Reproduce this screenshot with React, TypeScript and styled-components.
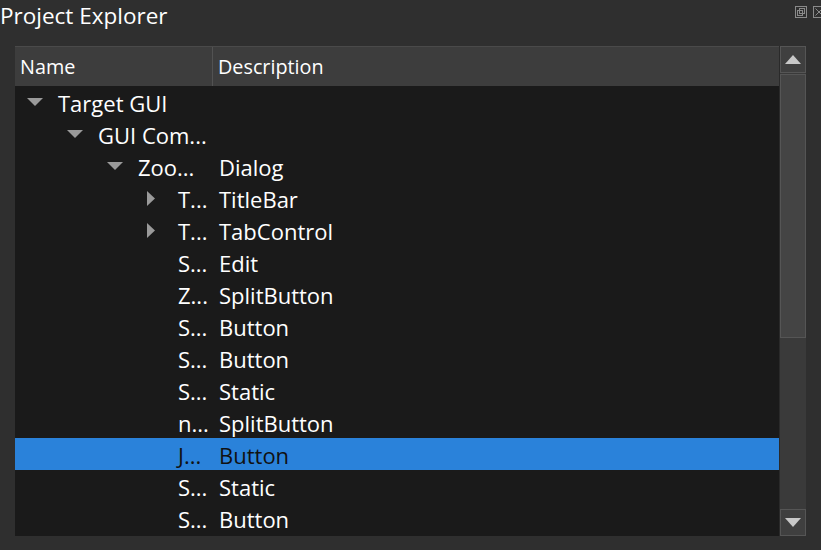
import React from "react";
import styled, { createGlobalStyle } from "styled-components";

const GlobalStyle = createGlobalStyle`
  html, body {
    margin: 0;
    padding: 0;
    background: #2f2f2f;
    overflow: hidden;
  }
  body {
    font-family: "Open Sans", "Noto Sans", "Liberation Sans", sans-serif;
    color: #ffffff;
  }
`;

const Window = styled.div`
  width: 821px;
  height: 550px;
  background: #2f2f2f;
  display: flex;
  flex-direction: column;
  box-sizing: border-box;
`;

const TitleBar = styled.div`
  height: 46px;
  display: flex;
  align-items: flex-start;
  justify-content: space-between;
`;

const Title = styled.div`
  font-size: 22.5px;
  line-height: 31px;
  color: #ffffff;
`;

const TitleButtons = styled.div`
  display: flex;
  gap: 6px;
  padding-top: 6px;
  margin-right: -4px;
`;

const Panel = styled.div`
  margin-left: 15px;
  width: 791px;
  height: 490px;
  display: flex;
`;

const Tree = styled.div`
  flex: 1;
  display: flex;
  flex-direction: column;
  background: #1a1a1a;
  overflow: hidden;
`;

const Header = styled.div`
  height: 40px;
  display: flex;
  background: #3d3d3d;
  border-top: 1px solid #4a4a4a;
  box-sizing: border-box;
`;

const HeaderCell = styled.div<{ $width?: number }>`
  ${(p) => (p.$width ? `width: ${p.$width}px;` : "flex: 1;")}
  box-sizing: border-box;
  padding-left: 5px;
  font-size: 19.8px;
  line-height: 40px;
  border-right: ${(p) => (p.$width ? "1px solid #525252" : "none")};
`;

const Body = styled.div`
  flex: 1;
  display: flex;
  flex-direction: column;
`;

const Row = styled.div<{ $selected?: boolean }>`
  height: 32px;
  display: flex;
  align-items: center;
  background: ${(p) => (p.$selected ? "#2a82da" : "transparent")};
  color: ${(p) => (p.$selected ? "#111111" : "#ffffff")};
  font-size: 22px;
  line-height: 32px;
  padding-top: 1px;
  box-sizing: border-box;
`;

const NameCell = styled.div<{ $level: number }>`
  width: 198px;
  flex-shrink: 0;
  display: flex;
  align-items: center;
  padding-left: ${(p) => 12 + p.$level * 40}px;
  box-sizing: border-box;
  white-space: nowrap;
  overflow: hidden;
`;

const Toggle = styled.span`
  width: 31px;
  flex-shrink: 0;
  display: flex;
  align-items: center;
  justify-content: flex-start;
  margin-top: -1px;
`;

const DescCell = styled.div`
  padding-left: 6px;
  white-space: nowrap;
`;

const ScrollBar = styled.div`
  width: 27px;
  display: flex;
  flex-direction: column;
  background: #3a3a3a;
  border-left: 1px solid #2a2a2a;
  box-sizing: border-box;
`;

const ScrollButton = styled.div`
  height: 27px;
  background: #3f3f3f;
  border: 1px solid #555555;
  box-sizing: border-box;
  display: flex;
  align-items: center;
  justify-content: center;
`;

const Track = styled.div`
  flex: 1;
  display: flex;
  flex-direction: column;
  padding-top: 1px;
`;

const Thumb = styled.div`
  height: 264px;
  background: #444444;
  border: 1px solid #555555;
  box-sizing: border-box;
`;

type Node = {
  name: string;
  desc?: string;
  level: number;
  arrow?: "down" | "right";
  selected?: boolean;
};

const rows: Node[] = [
  { name: "Target GUI", level: 0, arrow: "down" },
  { name: "GUI Com...", level: 1, arrow: "down" },
  { name: "Zoo...", desc: "Dialog", level: 2, arrow: "down" },
  { name: "T...", desc: "TitleBar", level: 3, arrow: "right" },
  { name: "T...", desc: "TabControl", level: 3, arrow: "right" },
  { name: "S...", desc: "Edit", level: 3 },
  { name: "Z...", desc: "SplitButton", level: 3 },
  { name: "S...", desc: "Button", level: 3 },
  { name: "S...", desc: "Button", level: 3 },
  { name: "S...", desc: "Static", level: 3 },
  { name: "n...", desc: "SplitButton", level: 3 },
  { name: "J...", desc: "Button", level: 3, selected: true },
  { name: "S...", desc: "Static", level: 3 },
  { name: "S...", desc: "Button", level: 3 },
];

const Arrow = ({ dir }: { dir: "down" | "right" }) =>
  dir === "down" ? (
    <svg width="16" height="8" viewBox="0 0 16 8">
      <polygon points="0,0 16,0 8,8" fill="#9a9a9a" />
    </svg>
  ) : (
    <svg width="8" height="15" viewBox="0 0 8 15">
      <polygon points="0,0 8,7.5 0,15" fill="#9a9a9a" />
    </svg>
  );

const FloatIcon = () => (
  <svg width="12" height="12" viewBox="0 0 12 12">
    <rect x="0.5" y="0.5" width="11" height="11" fill="none" stroke="#8a8a8a" />
    <rect x="4.5" y="2.5" width="5" height="5" fill="none" stroke="#8a8a8a" />
    <rect x="2.5" y="4.5" width="5" height="5" fill="none" stroke="#8a8a8a" />
  </svg>
);

const CloseIcon = () => (
  <svg width="12" height="12" viewBox="0 0 12 12">
    <rect x="0.5" y="0.5" width="11" height="11" fill="none" stroke="#8a8a8a" />
    <path d="M2.5 2.5 L9.5 9.5 M9.5 2.5 L2.5 9.5" stroke="#8a8a8a" />
  </svg>
);

export default function App() {
  return (
    <>
      <GlobalStyle />
      <Window>
        <TitleBar>
          <Title>Project Explorer</Title>
          <TitleButtons>
            <FloatIcon />
            <CloseIcon />
          </TitleButtons>
        </TitleBar>
        <Panel>
          <Tree>
            <Header>
              <HeaderCell $width={198}>Name</HeaderCell>
              <HeaderCell>Description</HeaderCell>
            </Header>
            <Body>
              {rows.map((r, i) => (
                <Row key={i} $selected={r.selected}>
                  <NameCell $level={r.level}>
                    <Toggle>{r.arrow && <Arrow dir={r.arrow} />}</Toggle>
                    {r.name}
                  </NameCell>
                  {r.desc && <DescCell>{r.desc}</DescCell>}
                </Row>
              ))}
            </Body>
          </Tree>
          <ScrollBar>
            <ScrollButton>
              <svg width="16" height="9" viewBox="0 0 16 9">
                <polygon points="0,9 16,9 8,0" fill="#c8c8c8" />
              </svg>
            </ScrollButton>
            <Track>
              <Thumb />
            </Track>
            <ScrollButton>
              <svg width="16" height="9" viewBox="0 0 16 9">
                <polygon points="0,0 16,0 8,9" fill="#c8c8c8" />
              </svg>
            </ScrollButton>
          </ScrollBar>
        </Panel>
      </Window>
    </>
  );
}
